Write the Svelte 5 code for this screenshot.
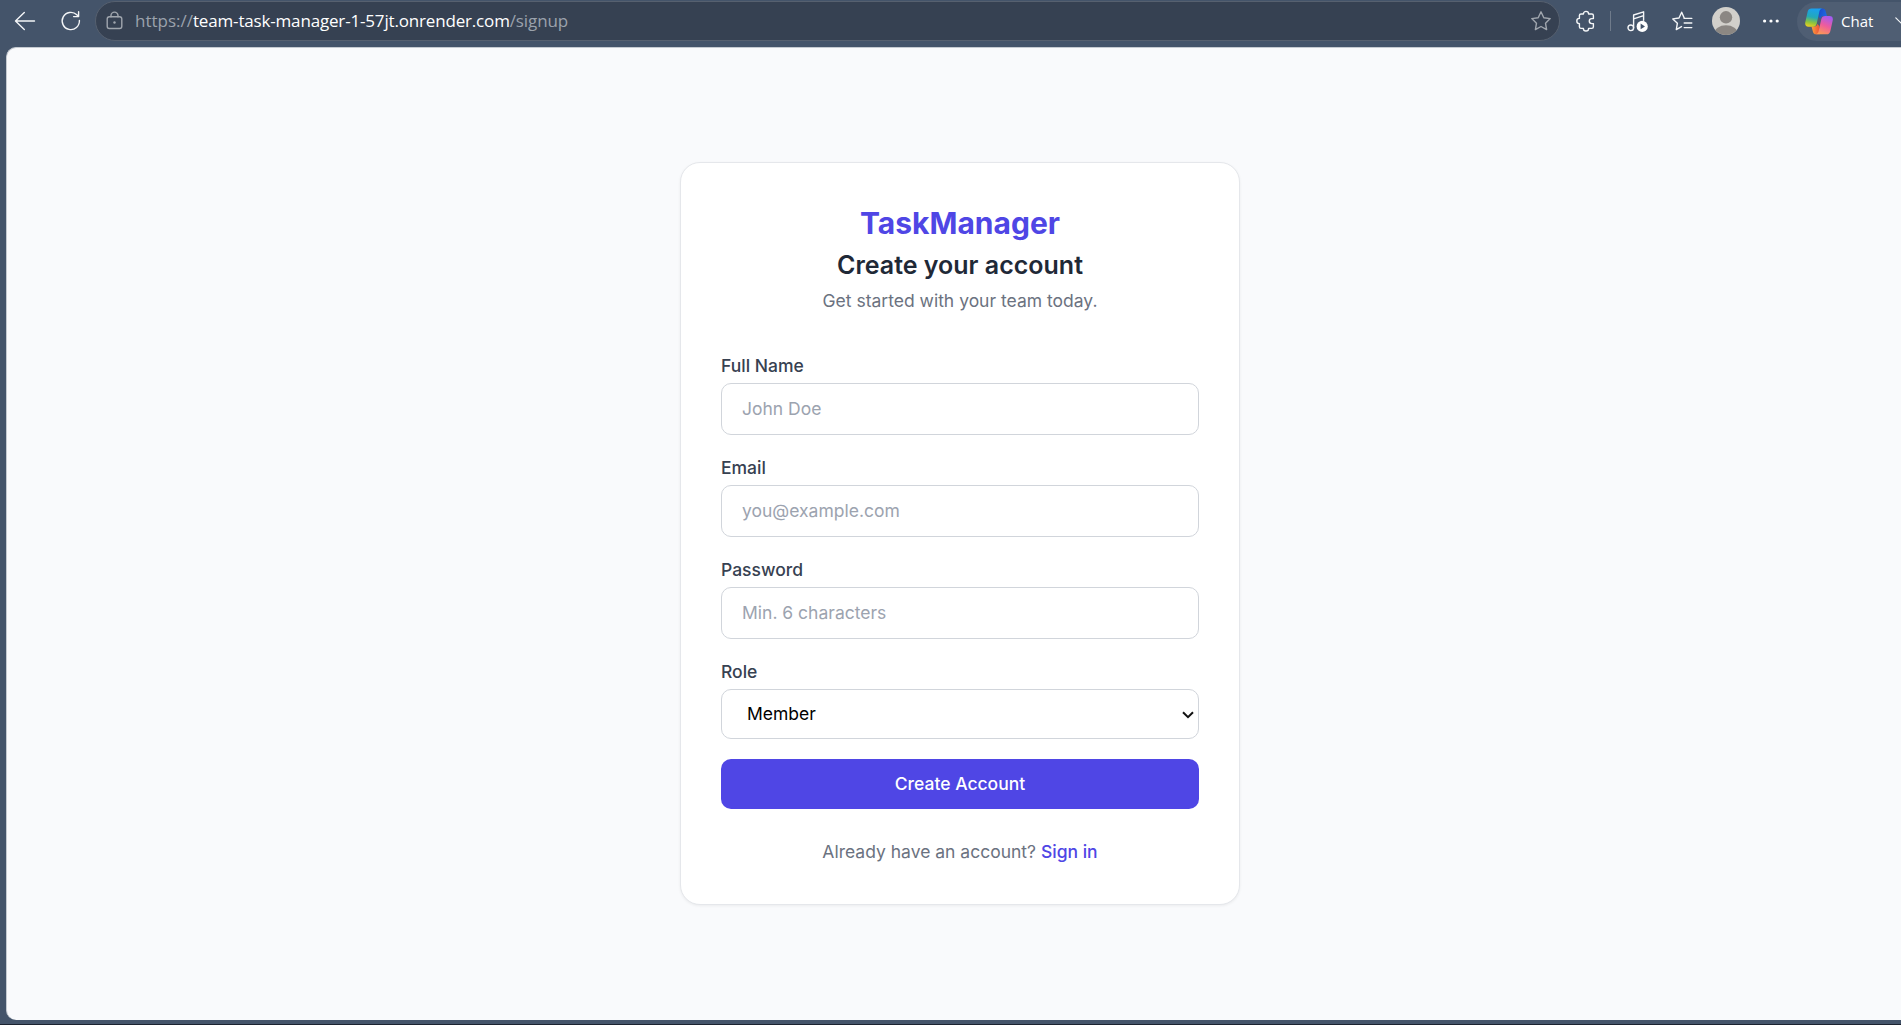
<script lang="ts">
  interface Field {
    id: string,
    label: string,
    type: string,
    placeholder: string
  }

  const fields: Array<Field> = [
    { id: 'name', label: 'Full Name', type: 'text', placeholder: 'John Doe' },
    { id: 'email', label: 'Email', type: 'email', placeholder: 'you@example.com' },
    { id: 'password', label: 'Password', type: 'password', placeholder: 'Min. 6 characters' }
  ];

  let form = $state({ name: '', email: '', password: '', role: 'member' });

  function submit(e: Event) {
    e.preventDefault();
  }
</script>

<div class="window">
  <header class="toolbar">
    <button class="tool back" aria-label="Back">
      <svg width="22" height="22" viewBox="0 0 22 22"><path d="M20.5 11H1.8M10.3 2.5 1.5 11l8.8 8.5" /></svg>
    </button>
    <button class="tool reload" aria-label="Refresh">
      <svg width="22" height="22" viewBox="0 0 22 22"><path d="M19.4 10.4a8.6 8.6 0 1 1-2.6-5.6l1.6 1.6M18.6 1.8v4.8h-5" /></svg>
    </button>

    <div class="address">
      <svg class="lock" width="18" height="20" viewBox="0 0 18 20">
        <rect x="1.2" y="5.8" width="14.6" height="11.7" rx="2.2" />
        <path d="M5 5.8V4.6a3.5 3.5 0 0 1 7 0v1.2" />
        <circle cx="8.5" cy="11.5" r="1.2" />
      </svg>
      <div class="url"><span class="scheme">https://</span><span class="host">team-task-manager-1-57jt.onrender.com</span><span class="path">/signup</span></div>
      <svg class="star" width="22" height="22" viewBox="0 0 22 22">
        <path d="M11 1.8l2.8 5.9 6.4.9-4.7 4.6 1.1 6.4L11 16.5l-5.6 3.1 1.1-6.4L1.8 8.6l6.4-.9z" />
      </svg>
    </div>

    <div class="actions">
      <svg class="puzzle" width="20" height="22" viewBox="0 0 20 22">
        <path d="M5 4h2.4a2.6 2.6 0 0 1 5.2 0h3.2a1.6 1.6 0 0 1 1.6 1.6v3h-1.6a2.5 2.5 0 0 0 0 5h1.6v3.2a1.6 1.6 0 0 1-1.6 1.6h-3.2a2.6 2.6 0 0 1-5.2 0H5a1.6 1.6 0 0 1-1.6-1.6v-3.2a2.6 2.6 0 0 1 0-5.2V5.6A1.6 1.6 0 0 1 5 4z" />
      </svg>
      <span class="divider"></span>
      <svg class="music" width="22" height="22" viewBox="0 0 22 22">
        <circle cx="3.8" cy="17.8" r="2.8" />
        <path d="M6.6 17.8V5l10-3.2v8.4M6.6 8.8l10-3.2" />
        <circle class="disc" cx="15.2" cy="16.4" r="5.6" />
        <path class="play" d="M13.6 13.6v5.6l4.4-2.8z" />
      </svg>
      <svg class="favorites" width="22" height="22" viewBox="0 0 22 22">
        <path d="M13.2 8 10.7 2.2 8 8 1.8 8.9l4.6 4.3-1.1 6.4 5.2-3" />
        <path d="M13.2 8.4h7.6M13.2 13h7.6M13.2 17.6h7.6" />
      </svg>
      <svg class="avatar" width="28" height="28" viewBox="0 0 28 28">
        <clipPath id="avatar-clip"><circle cx="14" cy="14" r="14" /></clipPath>
        <g clip-path="url(#avatar-clip)">
          <rect width="28" height="28" fill="#d2d0cb" />
          <circle cx="14" cy="10.3" r="6.2" fill="#8b8783" />
          <ellipse cx="14" cy="26.6" rx="11.8" ry="8.3" fill="#8b8783" />
        </g>
      </svg>
      <svg class="dots" width="18" height="6" viewBox="0 0 18 6">
        <circle cx="2.6" cy="3" r="1.6" /><circle cx="9" cy="3" r="1.6" /><circle cx="15.2" cy="3" r="1.6" />
      </svg>
    </div>

    <button class="chat">
      <svg class="copilot" width="28" height="27" viewBox="0 0 28 27">
        <defs>
          <linearGradient id="cp-left" x1=".4" y1="0" x2=".2" y2="1">
            <stop offset="0" stop-color="#1aa0ee" />
            <stop offset=".45" stop-color="#23a9b8" />
            <stop offset=".75" stop-color="#8fc43c" />
            <stop offset="1" stop-color="#f0d020" />
          </linearGradient>
          <linearGradient id="cp-top" x1="0" y1="0" x2="1" y2="0.4">
            <stop offset="0" stop-color="#1b46c4" />
            <stop offset="1" stop-color="#1d68e0" />
          </linearGradient>
          <linearGradient id="cp-right" x1=".7" y1="0" x2=".3" y2="1">
            <stop offset="0" stop-color="#a35bf3" />
            <stop offset=".5" stop-color="#ee5c9d" />
            <stop offset="1" stop-color="#fb9a55" />
          </linearGradient>
          <linearGradient id="cp-bottom" x1="0" y1="0" x2="1" y2="0">
            <stop offset="0" stop-color="#f9a13c" />
            <stop offset="1" stop-color="#ee4c38" />
          </linearGradient>
        </defs>
        <path fill="url(#cp-top)" d="M13 .5h4.500c1.700 0 2.500.8 3 2.300L22 8h-3.500c-1.500 0-2.500.8-2.900 2.500L13.500 9z" />
        <path fill="url(#cp-bottom)" d="M15 26.300H11c-1.700 0-2.500-.8-3-2.300L6.500 18.500h3c1.500 0 2.500-.8 2.900-2.500l1.900 2z" />
        <path fill="url(#cp-left)" d="M6.500.5h11c-1.800.3-2.700 1.200-3.100 3L11.700 15.500c-.6 2.300-1.600 3.300-3.900 3.300H3.500C.7 18.800-.2 17 .3 14.300L2.700 3.600C3.200 1.500 4.300.5 6.500.5z" />
        <path fill="url(#cp-right)" d="M21.500 26.300h-11c1.800-.3 2.700-1.200 3.100-3l2.700-12c.6-2.300 1.600-3.300 3.900-3.300h4.300c2.800 0 3.700 1.800 3.200 4.500l-2.400 10.700c-.5 2.100-1.600 3.100-3.800 3.100z" />
      </svg>
      <span>Chat</span>
      <svg class="chevron" width="14" height="8" viewBox="0 0 14 8"><path d="M.8 .8 7 7l6.200-6.200" /></svg>
    </button>
  </header>

  <main class="page">
    <section class="card">
      <div class="heading">
        <h1>TaskManager</h1>
        <h2>Create your account</h2>
        <p>Get started with your team today.</p>
      </div>

      <form onsubmit={submit}>
        {#each fields as f}
          <div class="field">
            <label for={f.id}>{f.label}</label>
            <input id={f.id} type={f.type} placeholder={f.placeholder} bind:value={form[f.id]} />
          </div>
        {/each}
        <div class="field">
          <label for="role">Role</label>
          <div class="select">
            <select id="role" bind:value={form.role}>
              <option value="member">Member</option>
              <option value="admin">Admin</option>
            </select>
            <svg width="12" height="8" viewBox="0 0 12 8"><path d="M1 1.200 6 6.200l5-5" /></svg>
          </div>
        </div>
        <button type="submit">Create Account</button>
      </form>

      <p class="footer">Already have an account? <a href="#signin">Sign in</a></p>
    </section>
  </main>
</div>

<style>
  :global(body) {
    overflow: hidden;
  }

  .window, .window * {
    box-sizing: border-box;
  }

  .window {
    display: flex;
    flex-direction: column;
    height: 1025px;
    overflow: hidden;
    background: #44546a;
    border-bottom: 1px solid #1b2230;
    font-family: Inter, "Liberation Sans", sans-serif;
  }

  h1, h2, p {
    margin: 0;
  }

  svg {
    display: block;
    flex: none;
    fill: none;
    stroke: #f4f6f8;
    stroke-width: 1.4;
    stroke-linecap: round;
    stroke-linejoin: round;
  }

  button {
    border: 0;
    padding: 0;
    font: inherit;
    background: none;
    cursor: pointer;
  }

  /* toolbar */
  .toolbar {
    display: flex;
    align-items: center;
    flex: none;
    height: 47px;
    padding: 0 0 5px 14px;
    font-family: "Open Sans", "Noto Sans", sans-serif;
  }

  .tool {
    flex: none;
  }

  .reload {
    margin-left: 24px;
  }

  .address {
    display: flex;
    align-items: center;
    flex: none;
    width: 1465px;
    height: 40px;
    margin-left: 13px;
    padding: 0 7px 0 10px;
    border: 1px solid #56606f;
    border-radius: 20px;
    background: #364152;
  }

  .lock, .star {
    stroke: #a0a6ae;
  }

  .lock circle {
    fill: #a0a6ae;
    stroke: none;
  }

  .url {
    flex: 1;
    margin-left: 11px;
    font-size: 17px;
    line-height: 24px;
    white-space: nowrap;
    color: #9ba2ac;
  }

  .host {
    letter-spacing: -0.17px;
    color: #fff;
  }

  .path {
    letter-spacing: -0.1px;
  }

  .actions {
    display: flex;
    align-items: center;
    flex: none;
    width: 237px;
    padding-left: 16px;
  }

  .divider {
    width: 1px;
    height: 20px;
    margin: 0 16px 0 14px;
    background: #6f7b8b;
  }

  .music .disc {
    fill: #fff;
    stroke: none;
  }

  .music .play {
    fill: #44546a;
    stroke: none;
  }

  .favorites {
    margin-left: 22px;
  }

  .avatar {
    margin-left: 19px;
    stroke: none;
  }

  .dots {
    margin-left: 22px;
    fill: #fff;
    stroke: none;
  }

  .chat {
    display: flex;
    align-items: center;
    flex: none;
    width: 140px;
    height: 39px;
    padding-left: 8px;
    border-radius: 20px;
    background: #4f5e73;
    color: #fff;
    font-size: 15px;
  }

  .copilot {
    stroke: none;
  }

  .chat span {
    margin-left: 8px;
  }

  .chevron {
    margin-left: 22px;
    stroke-width: 1.2;
  }

  /* page */
  .page {
    display: flex;
    align-items: center;
    justify-content: center;
    flex: none;
    width: 1907px;
    height: 973px;
    margin-left: 6px;
    padding-bottom: 2px;
    border-top: 1px solid #c5cad1;
    border-left: 1px solid #c5cad1;
    border-radius: 10px 0 0 10px;
    background: #f9fafc;
  }

  .card {
    width: 560px;
    height: 743px;
    padding: 40px;
    border: 1px solid #e5e7eb;
    border-radius: 20px;
    background: #fff;
    box-shadow: 0 1px 3px rgba(0, 0, 0, 0.06);
    font-size: 17.5px;
    line-height: 25px;
  }

  .heading {
    margin-bottom: 40px;
    text-align: center;
    color: #6b7280;
  }

  h1 {
    font-size: 30px;
    font-weight: 700;
    line-height: 40px;
    color: #4f46e5;
  }

  h2 {
    margin: 5px 0;
    font-size: 25px;
    font-weight: 600;
    line-height: 35px;
    color: #1f2937;
  }

  form {
    display: flex;
    flex-direction: column;
    gap: 20px;
  }

  .field {
    display: flex;
    flex-direction: column;
    gap: 5px;
  }

  label {
    font-weight: 500;
    color: #374151;
  }

  input, select {
    width: 100%;
    height: 52px;
    padding: 0 20px;
    border: 1px solid #d1d5db;
    border-radius: 10px;
    background: #fff;
    font: inherit;
  }

  input::placeholder {
    color: #9ca3af;
    opacity: 1;
  }

  .select {
    position: relative;
  }

  select {
    display: block;
    height: 50px;
    padding: 0 25px;
    appearance: none;
    color: #000;
  }

  .select svg {
    position: absolute;
    top: 22px;
    right: 5px;
    stroke: #111;
    stroke-width: 2;
    stroke-linecap: butt;
    stroke-linejoin: miter;
    pointer-events: none;
  }

  form button {
    height: 50px;
    border-radius: 10px;
    background: #4f46e5;
    color: #fff;
    font-weight: 500;
  }

  .footer {
    margin-top: 30px;
    text-align: center;
    color: #6b7280;
  }

  a {
    font-weight: 500;
    color: #4f46e5;
    text-decoration: none;
  }
</style>
